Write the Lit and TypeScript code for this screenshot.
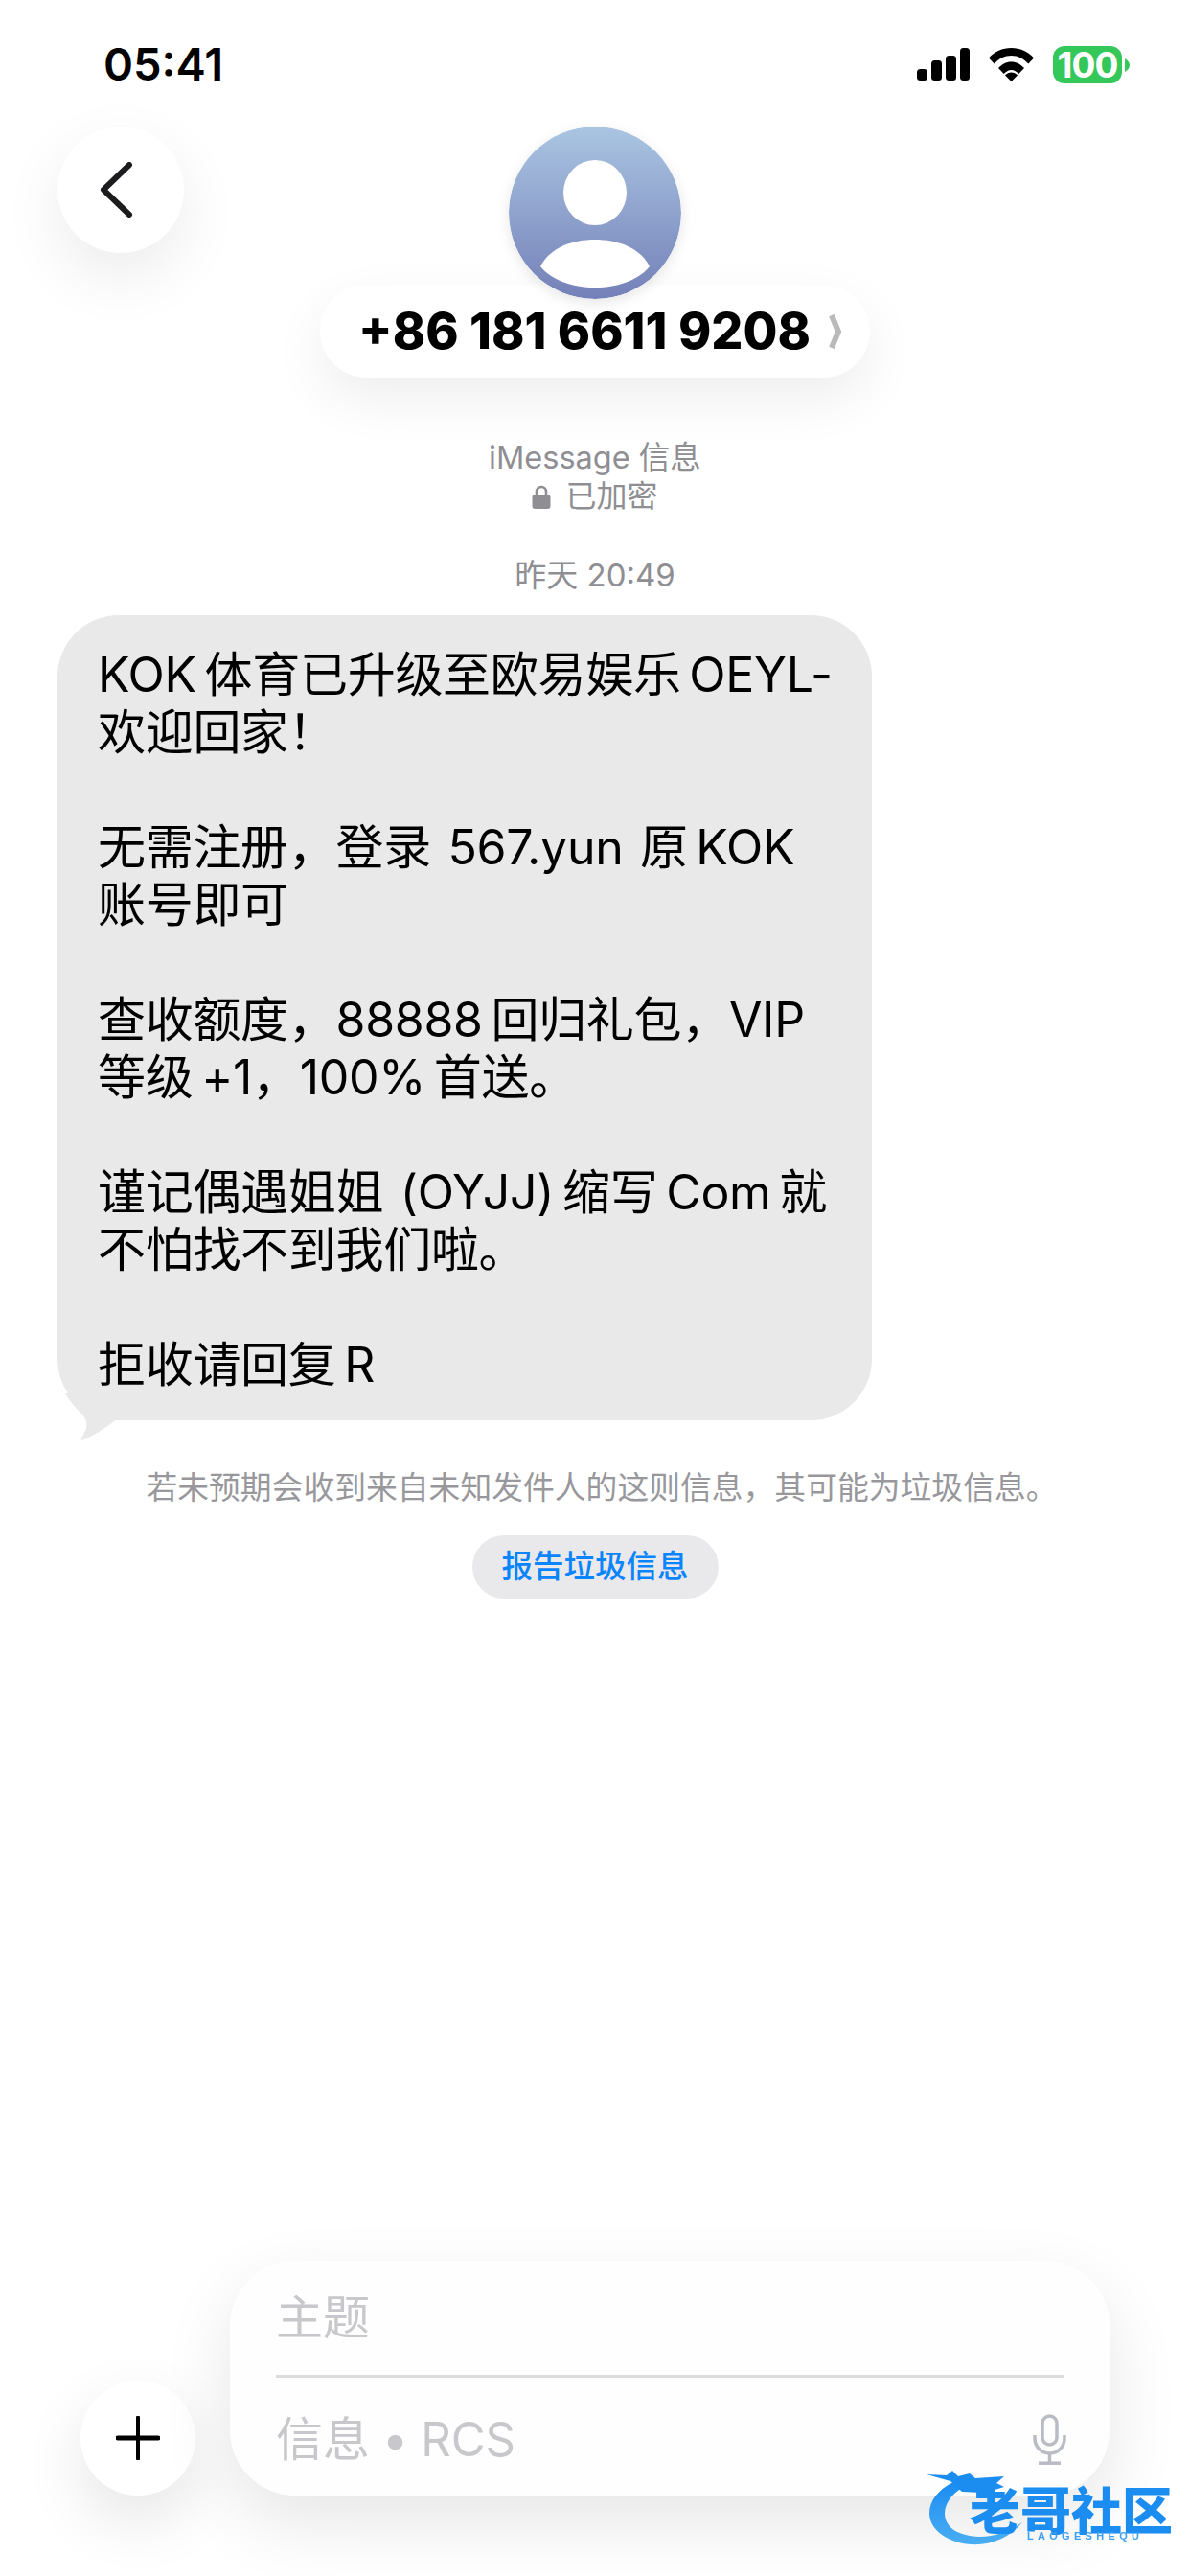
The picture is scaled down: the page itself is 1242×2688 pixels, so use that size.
import { LitElement, html, css } from "lit";
import { customElement } from "lit/decorators.js";

const MESSAGE = `KOK 体育已升级至欧易娱乐 OEYL-
欢迎回家！

无需注册，登录  567.yun  原 KOK
账号即可

查收额度，88888 回归礼包，VIP
等级 +1，100% 首送。

谨记偶遇姐姐  (OYJJ) 缩写 Com 就
不怕找不到我们啦。

拒收请回复 R`;

@customElement("app-root")
export class AppRoot extends LitElement {
  static styles = css`
    :host {
      display: flex;
      flex-direction: column;
      position: relative;
      width: 1242px;
      height: 2688px;
      overflow: hidden;
      background: #fff;
      color: #000;
      font-family: Inter, "Noto Sans CJK SC", "Noto Sans", sans-serif;
    }
    .status {
      display: flex;
      align-items: flex-start;
      justify-content: space-between;
      height: 132px;
      box-sizing: border-box;
      padding: 48px 63px 0 108px;
    }
    .time {
      font-size: 47px;
      font-weight: 600;
      line-height: 38px;
    }
    .sys {
      display: flex;
      align-items: flex-start;
      gap: 20px;
    }
    .signal {
      width: 55px;
      height: 34px;
      margin-top: 2px;
      display: block;
    }
    .wifi {
      width: 47px;
      height: 35px;
      margin-top: 2px;
      display: block;
    }
    .battery {
      display: flex;
      align-items: center;
      gap: 3px;
    }
    .cell {
      width: 72px;
      height: 39px;
      border-radius: 12px;
      background: #34c759;
      color: #fff;
      font-size: 37px;
      font-weight: 700;
      line-height: 39px;
      text-align: center;
      letter-spacing: -1px;
    }
    .tip {
      width: 5px;
      height: 14px;
      display: block;
    }
    .head {
      display: grid;
      grid-template-columns: 1fr auto 1fr;
      align-items: start;
    }
    .back {
      width: 132px;
      height: 132px;
      margin-left: 60px;
      border-radius: 50%;
      background: #fff;
      box-shadow: 0 24px 64px rgba(0, 0, 0, 0.08);
      display: flex;
      align-items: center;
      justify-content: center;
    }
    .back svg {
      width: 36px;
      height: 58px;
      display: block;
      margin-right: 10px;
    }
    .contact {
      display: flex;
      flex-direction: column;
      align-items: center;
    }
    .avatar {
      position: relative;
      z-index: 1;
      width: 180px;
      height: 180px;
      display: block;
      border-radius: 50%;
      box-shadow: 0 4px 14px rgba(0, 0, 0, 0.1);
    }
    .pill {
      display: flex;
      align-items: center;
      gap: 19px;
      height: 97px;
      margin-top: -15px;
      padding: 0 29px 0 40px;
      border-radius: 49px;
      background: #fff;
      box-shadow: 0 22px 56px rgba(0, 0, 0, 0.07);
      font-size: 52px;
      font-weight: 800;
      white-space: nowrap;
    }
    .pill svg {
      width: 14px;
      height: 36px;
      display: block;
    }
    .info {
      margin-top: 64px;
      color: #8e8e93;
      font-size: 32.5px;
      line-height: 40px;
      text-align: center;
    }
    .lock-line {
      display: flex;
      align-items: center;
      justify-content: center;
      gap: 15px;
      font-size: 32px;
    }
    .lock-line svg {
      width: 20px;
      height: 25px;
      display: block;
    }
    .stamp {
      margin-top: 42px;
      color: #8e8e93;
      font-size: 33px;
      line-height: 40px;
      text-align: center;
    }
    .bubble {
      position: relative;
      width: 850px;
      box-sizing: border-box;
      margin: 22px 0 0 60px;
      padding: 32px 0 28px 42px;
      border-radius: 64px;
      background: #e9e9e9;
      font-size: 50px;
      line-height: 60px;
      white-space: pre;
      word-spacing: -5px;
      letter-spacing: -0.3px;
    }
    .tail {
      position: absolute;
      left: 0;
      top: 808px;
      width: 80px;
      height: 60px;
      display: block;
    }
    .notice {
      margin-top: 50px;
      padding-left: 14px;
      color: #98989c;
      font-size: 32.8px;
      line-height: 40px;
      text-align: center;
    }
    .report {
      align-self: center;
      margin-top: 30px;
      width: 257px;
      height: 66px;
      border-radius: 33px;
      background: #e9e9eb;
      color: #0a84ff;
      font-size: 32.5px;
      font-weight: 500;
      line-height: 66px;
      text-align: center;
    }
    .spacer {
      flex: 1;
    }
    .bottom {
      display: flex;
      align-items: flex-end;
      gap: 36px;
      padding: 0 84px 84px;
    }
    .plus {
      flex: none;
      width: 120px;
      height: 120px;
      border-radius: 50%;
      background: #fff;
      box-shadow: 0 26px 64px rgba(0, 0, 0, 0.1);
      display: flex;
      align-items: center;
      justify-content: center;
    }
    .plus svg {
      width: 46px;
      height: 46px;
      display: block;
    }
    .composer {
      flex: 1;
      box-sizing: border-box;
      height: 245px;
      padding: 0 45px 0 48px;
      border-radius: 68px;
      background: #fefefe;
      box-shadow: 0 28px 72px rgba(0, 0, 0, 0.1);
      color: #c7c7cc;
      font-size: 49px;
    }
    .subject {
      height: 122px;
      margin-right: 3px;
      box-sizing: border-box;
      border-bottom: 3px solid #dcdcdc;
      line-height: 119px;
    }
    .msg {
      display: flex;
      align-items: center;
      justify-content: space-between;
      height: 120px;
      word-spacing: -1px;
    }
    .msg svg {
      width: 35px;
      height: 53px;
      display: block;
      margin-top: 8px;
    }
    .mark {
      position: absolute;
      left: 960px;
      top: 2570px;
      width: 282px;
      height: 118px;
      filter: blur(0.7px);
    }
    .mark svg {
      position: absolute;
      left: 0;
      top: 0;
      width: 150px;
      height: 100px;
      display: block;
    }
    .mark-cn {
      position: absolute;
      left: 52px;
      top: 32px;
      color: #1c8df0;
      font-size: 53px;
      font-weight: 900;
      line-height: 38px;
      white-space: nowrap;
    }
    .mark-en {
      position: absolute;
      left: 112px;
      top: 70px;
      color: #3d9fef;
      font-family: "Liberation Sans", sans-serif;
      font-size: 11px;
      font-weight: 700;
      line-height: 12px;
      letter-spacing: 4.3px;
      white-space: nowrap;
    }
  `;

  render() {
    return html`
      <div class="status">
        <div class="time">05:41</div>
        <div class="sys">
          <svg class="signal" viewBox="0 0 55 34">
            <rect x="0" y="22" width="11" height="12" rx="3.5" />
            <rect x="15" y="13" width="11" height="21" rx="3.5" />
            <rect x="30" y="8" width="11" height="26" rx="3.5" />
            <rect x="45" y="0" width="10" height="34" rx="3.5" />
          </svg>
          <svg class="wifi" viewBox="0 0 47 35">
            <path
              d="M0 10.500C6 3.800 14.200 0 23.500 0S41 3.800 47 10.500L41.300 16.500C36.600 11.300 30.400 8 23.500 8S10.400 11.300 5.700 16.500Z"
            />
            <path
              d="M10 21C13.500 17.200 18.200 14.500 23.500 14.500S33.500 17.200 37 21L31.300 27C29.200 24.800 26.500 23 23.500 23S17.800 24.800 15.700 27Z"
            />
            <path d="M17 28.500C18.800 26.700 21 25.500 23.500 25.500S28.200 26.700 30 28.500L23.500 35Z" />
          </svg>
          <div class="battery">
            <div class="cell">100</div>
            <svg class="tip" viewBox="0 0 5 14"><path d="M0 0C3 2 5 4 5 7S3 12 0 14Z" fill="#34c759" /></svg>
          </div>
        </div>
      </div>

      <div class="head">
        <div class="back">
          <svg viewBox="0 0 36 58" fill="none" stroke="#1c1c1e" stroke-width="6" stroke-linecap="round" stroke-linejoin="round">
            <path d="M32 3L5 29L32 55" />
          </svg>
        </div>
        <div class="contact">
          <svg class="avatar" viewBox="0 0 180 180">
            <defs>
              <linearGradient id="av" x1="0" y1="0" x2="0" y2="1">
                <stop offset="0" stop-color="#aac5e2" />
                <stop offset="1" stop-color="#7480b8" />
              </linearGradient>
            </defs>
            <circle cx="90" cy="90" r="90" fill="url(#av)" />
            <ellipse cx="90" cy="69" rx="33" ry="34" fill="#fff" />
            <path d="M33 146C42 128 64 118 90 118S138 128 147 146C136 160 114 168 90 168S44 160 33 146Z" fill="#fff" />
          </svg>
          <div class="pill">
            <span>+86 181 6611 9208</span>
            <svg viewBox="0 0 14 36" fill="none" stroke="#b9b9b9" stroke-width="6">
              <path d="M3 1L10 18L3 35" />
            </svg>
          </div>
        </div>
        <div></div>
      </div>

      <div class="info">
        <div>iMessage 信息</div>
        <div class="lock-line">
          <svg viewBox="0 0 20 25" fill="#8e8e93">
            <path d="M5 11V7a5 5 0 0 1 10 0v4" fill="none" stroke="#8e8e93" stroke-width="2.600" />
            <rect x="0.500" y="10" width="19" height="15" rx="3" />
          </svg>
          <span>已加密</span>
        </div>
      </div>
      <div class="stamp">昨天 20:49</div>

      <div class="bubble">${MESSAGE}<svg class="tail" viewBox="0 0 80 60">
          <path d="M8 4C18 22 34 28 30 40C28 47 24 50 25 53C35 50 50 40 63 30L63 4Z" fill="#e9e9e9" />
        </svg></div>

      <div class="notice">若未预期会收到来自未知发件人的这则信息，其可能为垃圾信息。</div>
      <div class="report">报告垃圾信息</div>

      <div class="spacer"></div>

      <div class="bottom">
        <div class="plus">
          <svg viewBox="0 0 46 46" stroke="#000" stroke-linecap="round">
            <path d="M23 1.500V44.500" stroke-width="4" />
            <path d="M2 23H44" stroke-width="5" />
          </svg>
        </div>
        <div class="composer">
          <div class="subject">主题</div>
          <div class="msg">
            <span>信息 • RCS</span>
            <svg viewBox="0 0 35 53" fill="none" stroke="#b9bcc4" stroke-width="3.500">
              <rect x="10" y="2" width="15" height="30" rx="7.500" />
              <path d="M2 22V25C2 34 8.500 41 17.500 41S33 34 33 25V22" />
              <path d="M17.500 41V50" />
              <path d="M6 51.200H29" />
            </svg>
          </div>
        </div>
      </div>

      <div class="mark">
        <svg viewBox="0 0 150 100">
          <defs>
            <linearGradient id="dr" x1="0" y1="0" x2="0" y2="1">
              <stop offset="0" stop-color="#1a8cf2" />
              <stop offset="1" stop-color="#4aaef2" />
            </linearGradient>
          </defs>
          <path d="M35 20C4 35 2 65 28 78C55 92 88 85 107 62C88 76 60 82 39 72C20 62 22 40 44 26Z" fill="url(#dr)" />
          <path d="M7 12L28 13L34 8L40 14L52 11L58 16L88 14L80 21L88 25L68 31L44 30L32 19Z" fill="#1c8df0" />
        </svg>
        <div class="mark-cn">老哥社区</div>
        <div class="mark-en">LAOGESHEQU</div>
      </div>
    `;
  }
}
